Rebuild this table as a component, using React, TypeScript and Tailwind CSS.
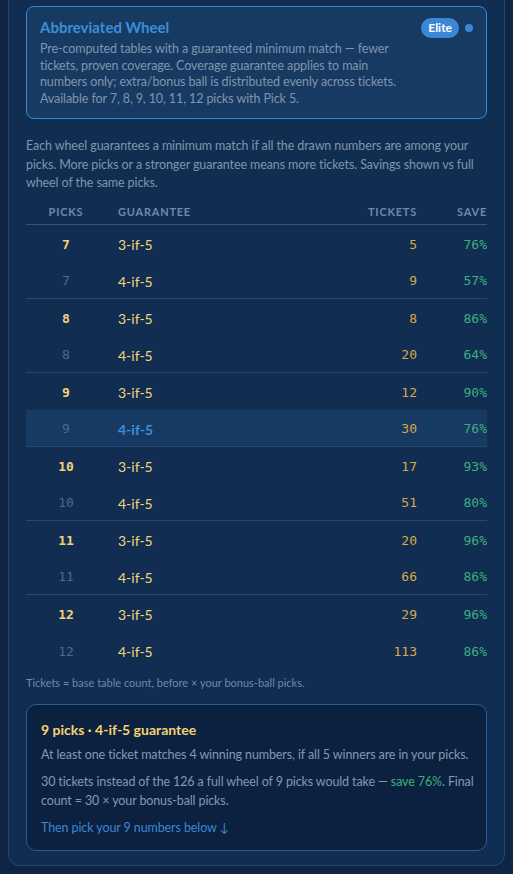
import React from 'react'

const rows = [
  { picks: 7, g: '3-if-5', tickets: 5, save: '76%' },
  { picks: 7, g: '4-if-5', tickets: 9, save: '57%' },
  { picks: 8, g: '3-if-5', tickets: 8, save: '86%' },
  { picks: 8, g: '4-if-5', tickets: 20, save: '64%' },
  { picks: 9, g: '3-if-5', tickets: 12, save: '90%' },
  { picks: 9, g: '4-if-5', tickets: 30, save: '76%', active: true },
  { picks: 10, g: '3-if-5', tickets: 17, save: '93%' },
  { picks: 10, g: '4-if-5', tickets: 51, save: '80%' },
  { picks: 11, g: '3-if-5', tickets: 20, save: '96%' },
  { picks: 11, g: '4-if-5', tickets: 66, save: '86%' },
  { picks: 12, g: '3-if-5', tickets: 29, save: '96%' },
  { picks: 12, g: '4-if-5', tickets: 113, save: '86%' },
]

const mono = "font-['Consolas','DejaVu_Sans_Mono',monospace]"

export default function App() {
  return (
    <div className="min-h-[874px] w-full bg-[#0e2544] px-2 font-['Lato',sans-serif]">
      <div className="rounded-b-xl border-x border-b border-[#1f4572] bg-[#112d51] px-[17px] pb-[14px] pt-1.5">
        {/* mode card */}
        <div className="relative rounded-lg border border-[#3a88d4] bg-[#173a62] px-[13px] pb-[11px] pt-[10px]">
          <div className="flex items-start justify-between">
            <h2 className="text-[15px] font-bold leading-5 text-[#3d8ed8]">Abbreviated Wheel</h2>
            <div className="flex items-center gap-[6px] pt-px">
              <span className="rounded-full bg-[#3a88d4] px-[7px] py-[2px] text-[12px] font-bold leading-[16px] text-white">
                Elite
              </span>
              <span className="h-[8px] w-[8px] rounded-full bg-[#3a88d4]" />
            </div>
          </div>
          <p className="mt-[3px] max-w-[362px] text-[12.5px] leading-[16.5px] tracking-[-0.1px] text-[#7f95ad]">
            Pre-computed tables with a guaranteed minimum match — fewer tickets, proven coverage. Coverage guarantee
            applies to main numbers only; extra/bonus ball is distributed evenly across tickets. Available for 7, 8, 9,
            10, 11, 12 picks with Pick 5.
          </p>
        </div>

        <p className="mt-[18px] text-[12.5px] leading-[18.5px] tracking-[-0.1px] text-[#7f95ad]">
          Each wheel guarantees a minimum match if all the drawn numbers are among your picks. More picks or a stronger
          guarantee means more tickets. Savings shown vs full wheel of the same picks.
        </p>

        {/* table */}
        <div className="mt-[8px]">
          <div className="grid h-[24px] grid-cols-[80px_1fr_100px_70px] items-center border-b border-[#2a5688] text-[11px] font-bold tracking-[0.07em] text-[#6a8bae]">
            <span className="text-center">PICKS</span>
            <span className="pl-3">GUARANTEE</span>
            <span className="text-right">TICKETS</span>
            <span className="text-right">SAVE</span>
          </div>
          {rows.map((r, i) => {
            const second = i % 2 === 1
            return (
              <div
                key={i}
                className={
                  'grid h-[37px] grid-cols-[80px_1fr_100px_70px] items-center pt-[3px] ' +
                  (second && i < rows.length - 1 ? 'border-b border-[#23497a] ' : '') +
                  (r.active ? 'bg-[#173a62] ' : '')
                }
              >
                <span
                  className={
                    mono +
                    ' text-center text-[13px] ' +
                    (second ? 'text-[#4f6a8a]' : 'font-bold text-[#f3d27a]')
                  }
                >
                  {r.picks}
                </span>
                <span
                  className={
                    'pl-3 text-[14px] ' + (r.active ? 'font-bold text-[#3d8ed8]' : 'text-[#f1d679]')
                  }
                >
                  {r.g}
                </span>
                <span className={mono + ' text-right text-[13px] text-[#d7a846]'}>{r.tickets}</span>
                <span className={mono + ' text-right text-[13px] text-[#3bb07c]'}>{r.save}</span>
              </div>
            )
          })}
        </div>

        <p className="mt-[6px] text-[11px] leading-4 text-[#6a8bae]">
          Tickets = base table count, before × your bonus-ball picks.
        </p>

        {/* selection summary */}
        <div className="mt-[13px] rounded-[10px] border border-[#2b5c93] bg-[#0c2140] pb-[13px] pl-[14px] pr-[8px] pt-[15px]">
          <h3 className="text-[14px] font-bold leading-5 text-[#f5d273]">9 picks · 4-if-5 guarantee</h3>
          <p className="mt-[5px] text-[12.5px] leading-[19px] tracking-[-0.1px] text-[#8298b0]">
            At least one ticket matches 4 winning numbers, if all 5 winners are in your picks.
          </p>
          <p className="mt-[8px] text-[12.5px] leading-[19px] tracking-[-0.12px] text-[#8298b0]">
            30 tickets instead of the 126 a full wheel of 9 picks would take —{' '}
            <span className="text-[#3bb07c]">save 76%</span>. Final count = 30 × your bonus-ball picks.
          </p>
          <p className="mt-[8px] text-[12.5px] leading-[19px] tracking-[-0.1px] text-[#3a88d4]">
            Then pick your 9 numbers below ↓
          </p>
        </div>
      </div>
    </div>
  )
}
